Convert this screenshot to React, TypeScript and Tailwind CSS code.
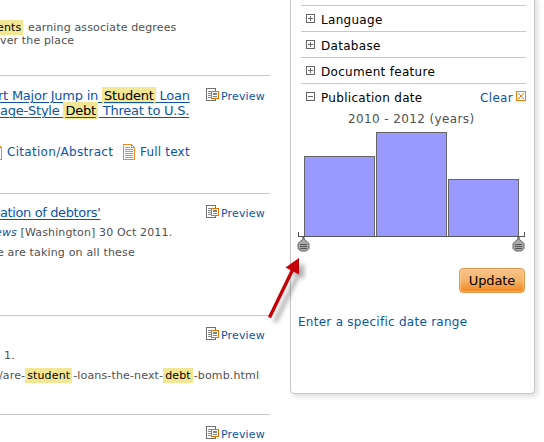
import type { ReactNode } from 'react';

function Mark({ children }: { children: ReactNode }) {
  return <span className="bg-[#f3e795] px-[2px] py-[1px] text-black">{children}</span>;
}

function PreviewIcon() {
  return (
    <svg width="14" height="14" viewBox="0 0 14 14" className="-mt-px shrink-0" shapeRendering="crispEdges">
      <path d="M.5.5h9v12h-9z" fill="#fff" stroke="#707070" />
      <path d="M2 3.5h5M2 5.5h3M2 7.5h3M2 9.5h3" stroke="#8a8a8a" />
      <path d="M5.5 3.5h7v7h-7z" fill="#fff" stroke="#e87000" strokeWidth="1.2" />
      <path d="M7 5.5h4M7 6.5h4M7 8.5h4" stroke="#808080" />
    </svg>
  );
}

function Preview() {
  return (
    <a className="flex h-[15px] w-[64px] shrink-0 items-center text-[11px] leading-[15px] tracking-[0.15px] text-[#0c55a5]">
      <PreviewIcon />
      <span className="mt-[2px] ml-px">Preview</span>
    </a>
  );
}

function DocIcon() {
  return (
    <svg width="12" height="16" viewBox="0 0 12 16" className="shrink-0" shapeRendering="crispEdges">
      <path d="M.5.5h8l3 3v12H.5z" fill="#fff" stroke="#f58a1c" />
      <path d="M8.5.5v3h3M2 3.5h5M2 5.5h8M2 7.5h8M2 9.5h8M2 11.5h8M2 13.5h8" fill="none" stroke="#f58a1c" />
    </svg>
  );
}

function Toggle({ open = false }: { open?: boolean }) {
  return (
    <svg width="9" height="9" viewBox="0 0 9 9" className="shrink-0" shapeRendering="crispEdges">
      <path d="M.5.5h8v8h-8z" fill="#fff" stroke="#666" />
      <path d={open ? 'M2 4.5h5' : 'M2 4.5h5M4.5 2v5'} stroke="#666" />
    </svg>
  );
}

function Facet({ label, open, children }: { label: string; open?: boolean; children?: ReactNode }) {
  return (
    <div className="flex h-[26px] items-center border-t border-[#c8c8c8] pl-[5px] text-[12px] tracking-[0.3px] text-black">
      <Toggle open={open} />
      <span className="ml-[6px] flex-1 pt-[2px]">{label}</span>
      {children}
    </div>
  );
}

function Handle() {
  return (
    <svg width="13" height="16" viewBox="0 0 13 16">
      <path d="M6.5 0v4" stroke="#555" strokeWidth="2" />
      <path d="M6.5 1.5l5.5 5v5L9.500 14h-6L1 11.500v-5z" fill="#a9a9a9" stroke="#666" />
      <path d="M3 7.500h7M3 9.500h7M3 11.500h7" stroke="#555" />
    </svg>
  );
}

function Results() {
  return (
    <main className="w-[270px] shrink-0 overflow-hidden whitespace-nowrap text-[11px] tracking-[0.14px] text-[#505050]">
      <section className="h-[76px] border-b border-[#c8c8c8] pt-[21px] leading-[13px]">
        <p className="-ml-[5px]"><Mark>ents</Mark><span className="ml-px"> earning associate degrees</span></p>
        <p>ver the place</p>
      </section>
      <section className="h-[118px] border-b border-[#c8c8c8] pt-[12px]">
        <div className="flex justify-between">
          <h2 className="text-[13px] leading-[15px] tracking-[-0.23px] text-[#0c55a5]">
            <a className="-ml-[2px] block underline underline-offset-2">rt Major Jump in <Mark>Student</Mark> Loan</a>
            <a className="block underline underline-offset-2">age-Style <Mark>Debt</Mark><span className="ml-px"> Threat to U.S.</span></a>
          </h2>
          <Preview />
        </div>
        <div className="mt-[26px] flex h-[16px] items-center text-[12px] tracking-[0.3px] text-[#0c55a5]">
          <span className="-ml-[10px] flex"><DocIcon /></span>
          <span className="ml-[5px] w-[116px]">Citation/Abstract</span>
          <DocIcon />
          <span className="ml-[5px] tracking-[0.2px]">Full text</span>
        </div>
      </section>
      <section className="h-[122px] border-b border-[#c8c8c8] pt-[11px]">
        <div className="flex justify-between">
          <h2 className="text-[13px] leading-[16px] tracking-[-0.38px] text-[#0c55a5]">
            <a className="underline underline-offset-2">ation of debtors'</a>
          </h2>
          <Preview />
        </div>
        <p className="-ml-[5px] pt-[2px] leading-[20px]"><i className="text-[#0c55a5]">ews</i> [Washington] 30 Oct 2011.</p>
        <p className="-ml-[3px] leading-[20px] tracking-[0.17px]">e are taking on all these</p>
      </section>
      <section className="h-[99px] border-b border-[#c8c8c8] pt-[11px]">
        <div className="flex justify-end"><Preview /></div>
        <p className="pl-[4px] pt-[4px] leading-[20px]">1.</p>
        <p className="-ml-px leading-[20px]">/are-<Mark>student</Mark><span className="ml-px tracking-[0.15px]">-loans-the-next-</span><Mark>debt</Mark><span className="ml-px">-bomb.html</span></p>
      </section>
      <section className="flex justify-end pt-[11px]"><Preview /></section>
    </main>
  );
}

function Histogram() {
  return (
    <div className="flex w-[227px] flex-col">
      <div className="flex h-[105px] items-end gap-px border-b border-[#555] pl-[6px]">
        <div className="-ml-[6px] mr-[4px] h-[4px] w-px bg-[#555]" />
        <div className="h-[80px] w-[71px] border border-b-0 border-[#666] bg-[#9999ff]" />
        <div className="h-[104px] w-[71px] border border-b-0 border-[#666] bg-[#9999ff]" />
        <div className="h-[57px] w-[71px] border border-b-0 border-[#666] bg-[#9999ff]" />
        <div className="ml-[4px] h-[4px] w-px bg-[#555]" />
      </div>
      <div className="-ml-px flex justify-between"><Handle /><Handle /></div>
    </div>
  );
}

function Arrow() {
  return (
    <svg width="50" height="80" viewBox="0 0 50 80" className="absolute left-[262px] top-[248px]">
      <g className="blur-[2px]" transform="translate(5 5)" opacity="0.4">
        <path d="M8 69L31 22" stroke="#333" strokeWidth="4" />
        <path d="M37 10L24 19L37 26z" fill="#333" />
      </g>
      <path d="M7.5 69.5L31 21" stroke="#c40008" strokeWidth="3.4" />
      <path d="M37 10L23.5 19.5L37 26.5z" fill="#c40008" />
    </svg>
  );
}

export default function App() {
  return (
    <div className="relative flex h-[442px] w-[544px] overflow-hidden bg-white font-['DejaVu_Sans',Verdana,sans-serif]">
      <Results />
      <aside className="-mt-[5px] ml-[20px] h-[399px] w-[245px] whitespace-nowrap rounded-[4px] border border-[#c8c8c8] bg-white pt-[9px] shadow-[3px_3px_5px_rgba(0,0,0,0.12)]">
        <div className="ml-[10px] w-[225px]">
          <Facet label="Language" />
          <Facet label="Database" />
          <Facet label="Document feature" />
          <Facet label="Publication date" open>
            <a className="flex items-center gap-[3px] text-[#0c55a5]">
              <span className="pt-[2px]">Clear</span>
              <svg width="10" height="10" viewBox="0 0 10 10" className="-mt-px" shapeRendering="crispEdges">
                <path d="M.5.5h9v9h-9zM2 2l6 6M8 2l-6 6" fill="none" stroke="#f47d14" />
              </svg>
            </a>
          </Facet>
        </div>
        <p className="h-[23px] pl-[57px] text-[12px] leading-[21px] tracking-[0.38px] text-[#505050]">2010 - 2012 (years)</p>
        <div className="ml-[7px]"><Histogram /></div>
        <div className="flex justify-end pr-[9px] pt-[15px]">
          <button className="h-[25px] w-[66px] rounded-[4px] border border-[#e5964b] bg-linear-to-b from-[#f8c58d] via-[#f6b267] to-[#ef8511] text-[13px] leading-[24px] tracking-[-0.1px] text-black shadow-[inset_0_0_0_1px_rgba(255,220,170,0.5)]">Update</button>
        </div>
        <a className="block pl-[7px] pt-[19px] text-[12px] leading-[20px] tracking-[0.27px] text-[#0c55a5]">Enter a specific date range</a>
      </aside>
      <Arrow />
    </div>
  );
}
